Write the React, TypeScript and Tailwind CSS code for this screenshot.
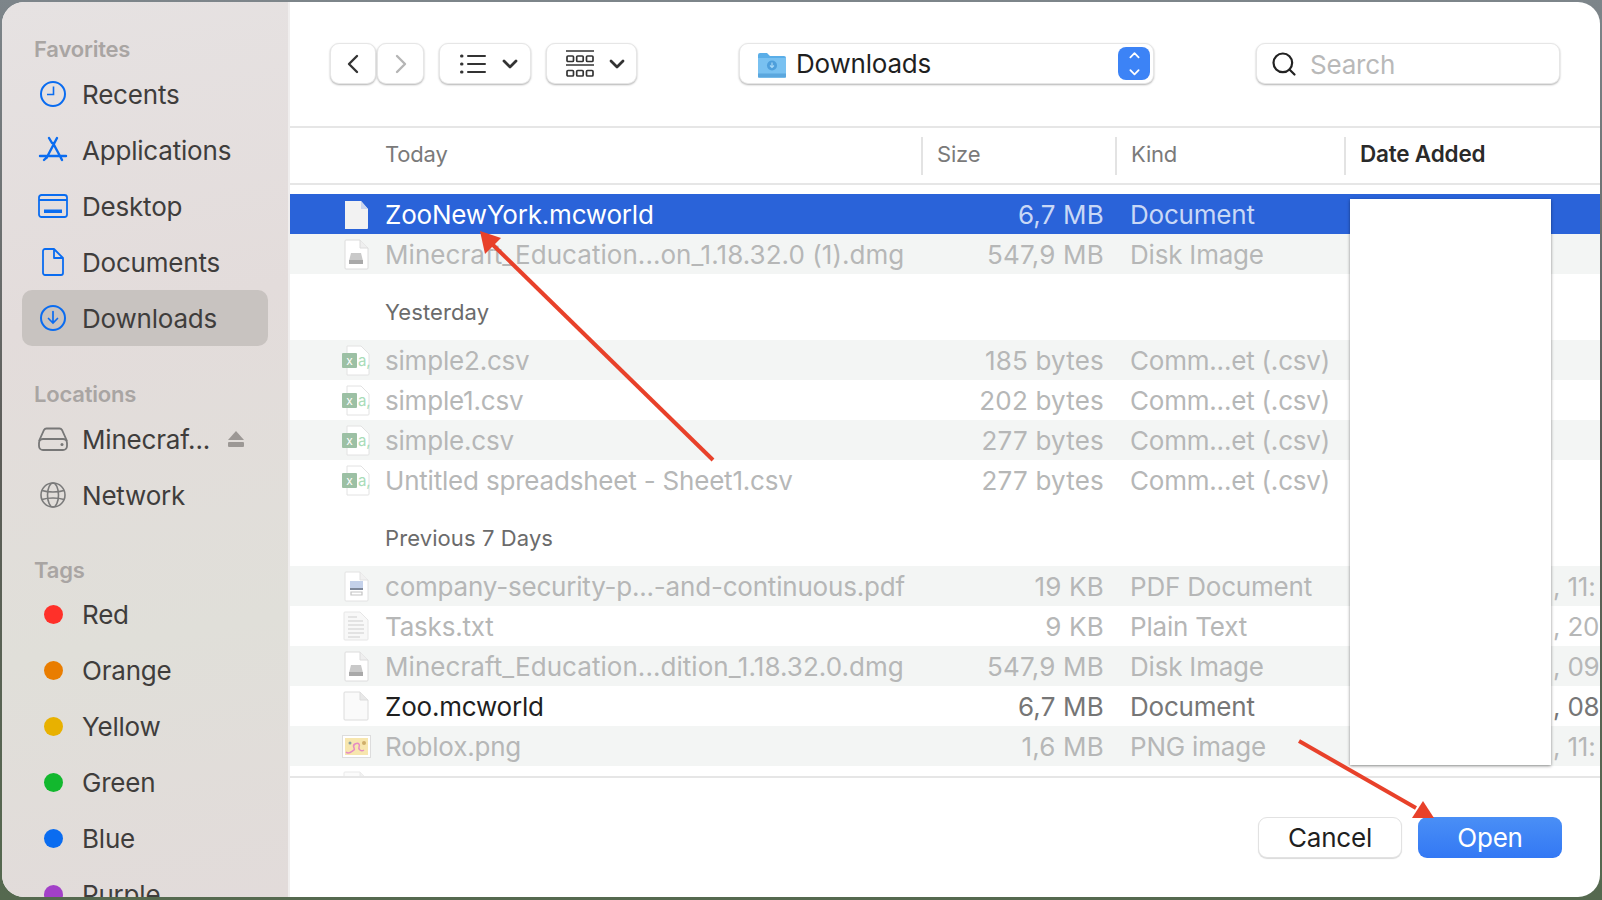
import { ChevronLeft, ChevronRight, ChevronDown, ChevronUp, Search } from "lucide-react";

const BLUE = "#0a6cf0";

function Clock() {
  return (
    <svg width="28" height="28" viewBox="0 0 28 28" fill="none" stroke={BLUE} strokeWidth="2">
      <circle cx="14" cy="14" r="12" />
      <path d="M14.5 6.5V14.5H8" strokeWidth="1.6" />
    </svg>
  );
}

function AppsIcon() {
  return (
    <svg width="30" height="28" viewBox="0 0 30 28" fill="none" stroke={BLUE} strokeWidth="2.4" strokeLinecap="round">
      <path d="M11 2l3 5M19 2L8.5 22M15 7l8 15M2 20h26M6 24l2-2M24 24l-1-2" />
    </svg>
  );
}

function DesktopIcon() {
  return (
    <svg width="30" height="24" viewBox="0 0 30 24" fill="none" stroke={BLUE} strokeWidth="1.8">
      <rect x="1" y="1" width="28" height="22" rx="2.5" />
      <path d="M1 6h28" />
      <rect x="6" y="15.5" width="18" height="3.5" fill={BLUE} stroke="none" />
    </svg>
  );
}

function DocIcon() {
  return (
    <svg width="22" height="28" viewBox="0 0 22 28" fill="none" stroke={BLUE} strokeWidth="1.8" strokeLinejoin="round">
      <path d="M3 1h9l9 9v15a2 2 0 0 1-2 2H3a2 2 0 0 1-2-2V3a2 2 0 0 1 2-2z" />
      <path d="M12 1v9h9" />
    </svg>
  );
}

function DownloadIcon() {
  return (
    <svg width="28" height="28" viewBox="0 0 28 28" fill="none" stroke={BLUE} strokeWidth="2" strokeLinecap="round">
      <circle cx="14" cy="14" r="12" />
      <path d="M14 7.5V19M9.5 14.5L14 19l4.500-4.500" strokeWidth="1.7" />
    </svg>
  );
}

function DriveIcon() {
  return (
    <svg width="30" height="24" viewBox="0 0 30 24" fill="none" stroke="#777" strokeWidth="1.8">
      <path d="M1 14L6 3a3 3 0 0 1 2.500-1.500h13A3 3 0 0 1 24 3l5 11" />
      <rect x="1" y="12" width="28" height="11" rx="4" />
      <circle cx="24" cy="17.500" r="1.500" fill="#777" stroke="none" />
    </svg>
  );
}

function GlobeIcon() {
  return (
    <svg width="28" height="28" viewBox="0 0 28 28" fill="none" stroke="#7b7b7b" strokeWidth="1.6">
      <circle cx="14" cy="14" r="12" />
      <ellipse cx="14" cy="14" rx="5.500" ry="12" />
      <path d="M3 9.500c6 2 16 2 22 0M3 18.500c6-2 16-2 22 0" />
    </svg>
  );
}

function Eject() {
  return (
    <svg width="18" height="18" viewBox="0 0 18 18" fill="#9c9895">
      <path d="M9 1l8 9H1z" />
      <rect x="1" y="12" width="16" height="5" rx="1" />
    </svg>
  );
}

function FolderIcon() {
  return (
    <svg width="30" height="28" viewBox="0 0 30 28">
      <path d="M1 5a2 2 0 0 1 2-2h7l3 3h14a2 2 0 0 1 2 2v18a2 2 0 0 1-1.500 1.500H2.500A2 2 0 0 1 1 26z" fill="#5aaee8" />
      <path d="M1 8h28v18a1.500 1.500 0 0 1-1.500 1.500h-25A1.500 1.500 0 0 1 1 26z" fill="#79c1f1" />
      <rect x="1" y="23.500" width="28" height="4" fill="#5ba7de" />
      <circle cx="15" cy="15.500" r="5" fill="#4e9fdc" />
      <path d="M15 12.500v5M13 15.500l2 2 2-2" stroke="#a6d8f7" strokeWidth="1.200" fill="none" />
    </svg>
  );
}

function BlankFile({ dim = false }: { dim?: boolean }) {
  return (
    <svg width="26" height="30" viewBox="0 0 26 30" className={dim ? "opacity-60" : ""}>
      <path d="M2 1h15l8 8v19a1 1 0 0 1-1 1H2a1 1 0 0 1-1-1V2a1 1 0 0 1 1-1z" fill="#fafafa" stroke="#dcdcdc" strokeWidth="1" />
      <path d="M17 1v8h8" fill="#e8e8e8" stroke="#dcdcdc" strokeWidth="1" />
    </svg>
  );
}

function SelectedFile() {
  return (
    <svg width="25" height="29" viewBox="0 0 25 29">
      <path d="M1 1h16l7 8v19a1 1 0 0 1-1 1H1z" fill="#f2f2f2" />
      <path d="M17 1v8h7z" fill="#c9d5ee" />
    </svg>
  );
}

function DmgFile() {
  return (
    <svg width="25" height="31" viewBox="0 0 25 31">
      <path d="M2 1h14l8 8v20a1 1 0 0 1-1 1H2a1 1 0 0 1-1-1V2a1 1 0 0 1 1-1z" fill="#fff" stroke="#dcdcdc" />
      <path d="M16 1v8h8" fill="#efefef" stroke="#dcdcdc" />
      <path d="M7 14h10l2 8H5z" fill="#c9c9c9" />
      <rect x="5" y="21" width="14" height="4" fill="#a9a9a9" />
    </svg>
  );
}

function CsvFile() {
  return (
    <svg width="28" height="31" viewBox="0 0 28 31" fill="none">
      <path d="M5 1h14l8 8v20a1 1 0 0 1-1 1H5z" fill="#fff" stroke="#e2e2e2" />
      <rect x="0" y="8" width="15" height="15" rx="1" fill="#9cc0a4" />
      <text x="7.500" y="20" textAnchor="middle" fontSize="12" fontFamily="Inter" fill="#fff">x</text>
      <text x="16" y="21" fontSize="15" fontFamily="Inter" fill="#a8dcb8">a,</text>
    </svg>
  );
}

function PdfFile() {
  return (
    <svg width="25" height="31" viewBox="0 0 25 31">
      <path d="M2 1h14l8 8v20a1 1 0 0 1-1 1H2a1 1 0 0 1-1-1V2a1 1 0 0 1 1-1z" fill="#fff" stroke="#e2e2e2" />
      <path d="M16 1v8h8" fill="#f1f1f1" stroke="#e2e2e2" />
      <rect x="6" y="10" width="13" height="7" fill="#c4d1ea" />
      <rect x="6" y="17" width="13" height="2" fill="#7d8799" />
      <path d="M7 21h11v3H7z" fill="none" stroke="#c3c3c3" strokeWidth="1.200" />
    </svg>
  );
}

function TxtFile() {
  return (
    <svg width="26" height="30" viewBox="0 0 26 30">
      <path d="M2 1h15l8 8v19a1 1 0 0 1-1 1H2a1 1 0 0 1-1-1V2a1 1 0 0 1 1-1z" fill="#f8f8f8" stroke="#e6e6e6" />
      <path d="M5 6h9M5 10h15M5 14h16M5 18h16M5 22h16M5 26h12" stroke="#dcdcdc" strokeWidth="1.500" />
    </svg>
  );
}

function PngFile() {
  return (
    <svg width="29" height="23" viewBox="0 0 29 23">
      <rect x="0.500" y="0.500" width="28" height="22" fill="#fff" stroke="#ddd" />
      <rect x="3" y="3" width="23" height="17" fill="#f7e6ae" />
      <path d="M4 17c3 3 6-1 8-2s-3-4 1-6 5 1 4 3 2 5 5 3" fill="none" stroke="#e58bc4" strokeWidth="1.500" />
      <circle cx="8" cy="8" r="1.500" fill="#8aa0a0" />
      <circle cx="22" cy="8" r="2" fill="#cfae6a" />
    </svg>
  );
}

type SideItem = { label: string; icon?: React.ReactNode; dot?: string };

const FAVORITES: SideItem[] = [
  { label: "Recents", icon: <Clock /> },
  { label: "Applications", icon: <AppsIcon /> },
  { label: "Desktop", icon: <DesktopIcon /> },
  { label: "Documents", icon: <DocIcon /> },
  { label: "Downloads", icon: <DownloadIcon /> },
];

const TAGS = [
  { label: "Red", dot: "bg-[#ff3029]" },
  { label: "Orange", dot: "bg-[#e97d00]" },
  { label: "Yellow", dot: "bg-[#e8b100]" },
  { label: "Green", dot: "bg-[#12b82e]" },
  { label: "Blue", dot: "bg-[#0a6cf0]" },
  { label: "Purple", dot: "bg-[#a240c8]" },
];

function SideRow({ icon, label, active, children }: { icon: React.ReactNode; label: string; active?: boolean; children?: React.ReactNode }) {
  return (
    <div className={`flex items-center h-[56px] shrink-0 rounded-[10px] pl-[16px] pr-[8px] ${active ? "bg-[#c8c3c0]" : ""}`}>
      <div className="w-[30px] flex justify-center shrink-0">{icon}</div>
      <span className="ml-[14px] pt-[2px] text-[#3f3d3c] flex-1">{label}</span>
      {children}
    </div>
  );
}

function SideLabel({ children, className = "" }: { children: React.ReactNode; className?: string }) {
  return <div className={`h-[22px] shrink-0 pl-[12px] text-[22px] font-semibold text-[#a9a5a3] flex items-center ${className}`}>{children}</div>;
}

type FileRow = { icon: React.ReactNode; name: string; size: string; kind: string; date?: string; odd?: boolean; sel?: boolean; live?: boolean; wide?: boolean };

function Row({ icon, name, size, kind, date, odd, sel, live, wide }: FileRow) {
  const bg = sel ? "bg-[#2a63d9]" : odd ? "bg-[#f3f5f4]" : "";
  const nameColor = sel ? "text-white" : live ? "text-[#1f1f1f]" : "text-[#b6b7b7]";
  const metaColor = sel ? "text-[#c9d8f6]" : live ? "text-[#767676]" : "text-[#b6b7b7]";
  return (
    <div className={`flex items-center h-[40px] shrink-0 ${bg}`}>
      <div className="w-[95px] pl-[50px] pr-[13px] flex justify-center shrink-0">{icon}</div>
      <div className={`w-[540px] shrink-0 pt-[2px] whitespace-nowrap ${wide ? "tracking-[0.05px]" : ""} ${nameColor}`}>{name}</div>
      <div className={`w-[179px] shrink-0 pt-[2px] text-right whitespace-nowrap tracking-[0.2px] ${metaColor}`}>{size}</div>
      <div className={`ml-[26px] w-[423px] shrink-0 pt-[2px] whitespace-nowrap ${metaColor}`}>{kind}</div>
      <div className={`pt-[2px] whitespace-nowrap ${metaColor}`}>{date}</div>
    </div>
  );
}

function SectionHead({ children }: { children: React.ReactNode }) {
  return <div className="h-[66px] shrink-0 pl-[95px] pt-[9px] flex items-center text-[22px] font-normal tracking-[0.1px] text-[#6b6b6b]">{children}</div>;
}

const TOOL_BTN = "h-[41px] rounded-[9px] bg-white border border-[#e6e6e6] shadow-[0_1px_2px_rgba(0,0,0,0.3)] flex items-center shrink-0";

export default function App() {
  return (
    <div className="relative w-[1602px] h-[900px] overflow-hidden bg-[linear-gradient(180deg,#7d858a_0%,#5c5c58_50%,#55694f_100%)] font-['Inter','Liberation_Sans',sans-serif] text-[26px] tracking-[-0.2px] leading-none">
      <div className="absolute inset-x-[2px] top-[2px] bottom-[3px] rounded-[22px] overflow-hidden bg-white flex">
        {/* Sidebar */}
        <div className="w-[288px] shrink-0 border-r-2 border-[#f0eeee] bg-[linear-gradient(170deg,#e6e2e2_0%,#e3dcdb_35%,#e0dfd9_70%,#e2dbda_100%)] pl-[20px] pr-[20px] overflow-hidden flex flex-col">
          <SideLabel className="mt-[36px] mb-[6px]">Favorites</SideLabel>
          {FAVORITES.map((f) => (
            <SideRow key={f.label} icon={f.icon} label={f.label} active={f.label === "Downloads"} />
          ))}
          <SideLabel className="mt-[37px] mb-[6px]">Locations</SideLabel>
          <SideRow icon={<DriveIcon />} label="Minecraf...">
            <div className="mr-[15px]"><Eject /></div>
          </SideRow>
          <SideRow icon={<GlobeIcon />} label="Network" />
          <SideLabel className="mt-[36px] mb-[5px]">Tags</SideLabel>
          {TAGS.map((t) => (
            <SideRow key={t.label} label={t.label} icon={<div className={`w-[19px] h-[19px] rounded-full ${t.dot}`} />} />
          ))}
        </div>

        {/* Main */}
        <div className="flex-1 min-w-0 flex flex-col">
          {/* Toolbar */}
          <div className="h-[126px] shrink-0 border-b-2 border-[#e6e6e6] pt-[41px] pl-[40px] flex items-start">
            <div className={`${TOOL_BTN} w-[46px] justify-center`}><ChevronLeft size={32} strokeWidth={1.8} className="text-[#333]" /></div>
            <div className={`${TOOL_BTN} w-[47px] ml-[1px] justify-center`}><ChevronRight size={32} strokeWidth={1.8} className="text-[#b5b5b5]" /></div>
            <div className={`${TOOL_BTN} w-[92px] ml-[15px] pl-[20px]`}>
              <svg width="26" height="20" viewBox="0 0 26 20" stroke="#333" strokeWidth="2" strokeLinecap="round">
                <path d="M8 2h17M8 10h17M8 18h17" />
                <path d="M1.500 2h.5M1.500 10h.5M1.500 18h.5" strokeWidth="3" />
              </svg>
              <ChevronDown size={24} strokeWidth={2.8} className="ml-[12px] text-[#333]" />
            </div>
            <div className={`${TOOL_BTN} w-[91px] ml-[15px] pl-[19px]`}>
              <svg width="28" height="28" viewBox="0 0 28 28" fill="none" stroke="#333" strokeWidth="1.700">
                <path d="M0 1h28M0 15h28" />
                <rect x="1" y="6" width="6.500" height="5.500" rx="1" />
                <rect x="10.700" y="6" width="6.500" height="5.500" rx="1" />
                <rect x="20.500" y="6" width="6.500" height="5.500" rx="1" />
                <rect x="1" y="20.500" width="6.500" height="5.500" rx="1" />
                <rect x="10.700" y="20.500" width="6.500" height="5.500" rx="1" />
                <rect x="20.500" y="20.500" width="6.500" height="5.500" rx="1" />
              </svg>
              <ChevronDown size={24} strokeWidth={2.8} className="ml-[11px] text-[#333]" />
            </div>
            <div className={`${TOOL_BTN} w-[415px] ml-[102px] pl-[17px] pr-[3px]`}>
              <FolderIcon />
              <span className="ml-[9px] text-[#1f1f1f] flex-1">Downloads</span>
              <div className="w-[32px] h-[33px] rounded-[8px] bg-[#3c83f6] flex flex-col items-center justify-center text-white">
                <ChevronUp size={17} strokeWidth={2.6} />
                <ChevronDown size={17} strokeWidth={2.6} />
              </div>
            </div>
            <div className={`${TOOL_BTN} w-[304px] ml-[102px] pl-[13px]`}>
              <Search size={28} strokeWidth={1.9} className="text-[#222]" />
              <span className="ml-[12px] pt-[3px] text-[#b9b9b9]">Search</span>
            </div>
          </div>

          {/* Column headers */}
          <div className="h-[57px] shrink-0 border-b-2 border-[#e6e6e6] flex items-center text-[22px] text-[#7a7a7a]">
            <div className="w-[631px] pl-[95px] pb-[4px] shrink-0">Today</div>
            <div className="w-[194px] h-[38px] shrink-0 border-l-2 border-[#e3e3e3] pl-[14px] pb-[4px] flex items-center">Size</div>
            <div className="w-[229px] h-[38px] shrink-0 border-l-2 border-[#e3e3e3] pl-[14px] pb-[4px] flex items-center">Kind</div>
            <div className="h-[38px] border-l-2 border-[#e3e3e3] pl-[14px] pb-[2px] flex items-center text-[22.500px] font-semibold text-[#2a2a2a]">Date Added</div>
          </div>

          {/* File list */}
          <div className="h-[591px] shrink-0 pt-[9px] overflow-hidden flex flex-col">
            <Row icon={<SelectedFile />} name="ZooNewYork.mcworld" size="6,7 MB" kind="Document" sel />
            <Row icon={<DmgFile />} name="Minecraft_Education...on_1.18.32.0 (1).dmg" size="547,9 MB" kind="Disk Image" odd wide />
            <SectionHead>Yesterday</SectionHead>
            <Row icon={<CsvFile />} name="simple2.csv" size="185 bytes" kind="Comm...et (.csv)" odd />
            <Row icon={<CsvFile />} name="simple1.csv" size="202 bytes" kind="Comm...et (.csv)" />
            <Row icon={<CsvFile />} name="simple.csv" size="277 bytes" kind="Comm...et (.csv)" odd />
            <Row icon={<CsvFile />} name="Untitled spreadsheet - Sheet1.csv" size="277 bytes" kind="Comm...et (.csv)" />
            <SectionHead>Previous 7 Days</SectionHead>
            <Row icon={<PdfFile />} name="company-security-p...-and-continuous.pdf" size="19 KB" kind="PDF Document" date=", 11:" odd />
            <Row icon={<TxtFile />} name="Tasks.txt" size="9 KB" kind="Plain Text" date=", 20" />
            <Row icon={<DmgFile />} name="Minecraft_Education...dition_1.18.32.0.dmg" size="547,9 MB" kind="Disk Image" date=", 09" odd wide />
            <Row icon={<BlankFile />} name="Zoo.mcworld" size="6,7 MB" kind="Document" date=", 08" live />
            <Row icon={<PngFile />} name="Roblox.png" size="1,6 MB" kind="PNG image" date=", 11:" odd />
            <Row icon={<BlankFile dim />} name="" size="" kind="" />
          </div>

          {/* Footer */}
          <div className="flex-1 border-t-2 border-[#e6e6e6] pt-[39px] pr-[38px] flex justify-end items-start">
            <div className="w-[144px] h-[41px] rounded-[9px] bg-white border border-[#e2e2e2] shadow-[0_1px_1px_rgba(0,0,0,0.15)] flex items-center justify-center text-[#1f1f1f]">Cancel</div>
            <div className="w-[144px] h-[41px] ml-[16px] rounded-[9px] bg-[linear-gradient(180deg,#4a8ff6,#3378f4)] flex items-center justify-center text-white">Open</div>
          </div>
        </div>
      </div>

      {/* White redaction box */}
      <div className="absolute left-[1350px] top-[199px] w-[201px] h-[566px] bg-white shadow-[0_1px_3px_rgba(0,0,0,0.45)]" />

      {/* Annotation arrows */}
      <svg className="absolute inset-0" width="1602" height="900" fill="#e8412a" stroke="none">
        <path d="M713 460L491 243" stroke="#e8412a" strokeWidth="4" />
        <path d="M480 231L501 238L485 254z" />
        <path d="M1299 741L1416 808" stroke="#e8412a" strokeWidth="4" />
        <path d="M1434 818L1412 818L1423 801z" />
      </svg>
    </div>
  );
}
